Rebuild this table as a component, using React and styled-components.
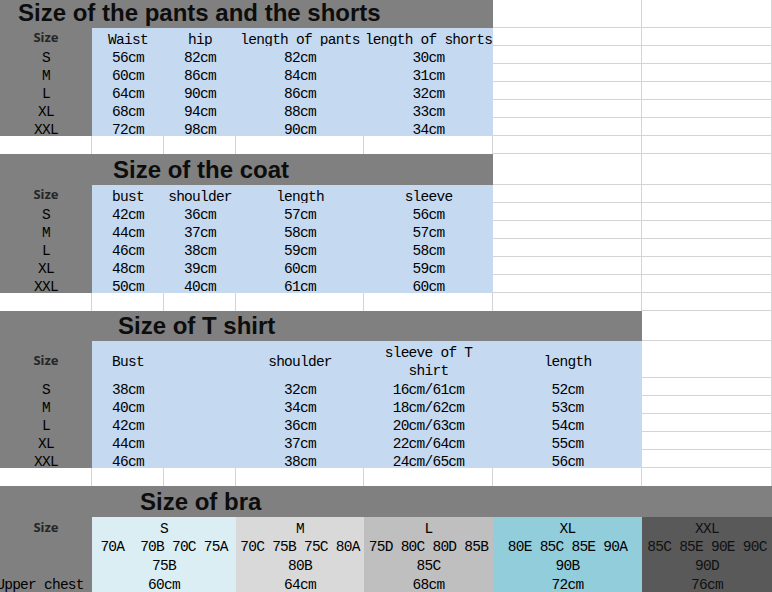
import React from 'react';
import styled, { createGlobalStyle } from 'styled-components';

const Global = createGlobalStyle`
  html, body { margin: 0; padding: 0; background: #ffffff; overflow: hidden; }
  body { width: 772px; height: 592px; }
`;

const TONES = {
  white: '#ffffff',
  gray: '#808080',
  blue: '#c5d9f1',
  braS: '#daeef3',
  braM: '#d9d9d9',
  braL: '#bfbfbf',
  braXL: '#92cddc',
  braXXL: '#595959',
};

const GRID = '#d4d4d4';

const COLS = [92, 72, 72, 128, 129, 149, 130];

const Sheet = styled.div`
  display: grid;
  grid-template-columns: ${COLS.map((c) => `${c}px`).join(' ')};
  grid-template-rows: ${(p) => p.$rows};
  width: 772px;
  height: 592px;
  overflow: hidden;
  font-family: "Liberation Mono", "DejaVu Sans Mono", monospace;
  font-size: 14.5px;
  letter-spacing: -0.75px;
  color: #000000;
`;

const Cell = styled.div`
  grid-column: span ${(p) => p.$span};
  background: ${(p) => TONES[p.$tone]};
  box-shadow: ${(p) => {
    const s = [];
    if (p.$right) s.push(`inset -1px 0 0 ${GRID}`);
    if (p.$bottom) s.push(`inset 0 -1px 0 ${GRID}`);
    return s.length ? s.join(', ') : 'none';
  }};
  display: flex;
  flex-direction: column;
  justify-content: center;
  align-items: center;
  min-width: 0;
  white-space: pre;
  line-height: 18px;
  padding-top: ${(p) => (p.$shift ? '5px' : '0')};
  box-sizing: border-box;
`;

const TitleCell = styled(Cell)`
  justify-content: flex-end;
  align-items: flex-start;
  padding: 0 0 1px ${(p) => p.$indent}px;
  font-family: "Liberation Sans", Arial, sans-serif;
  font-weight: 700;
  font-size: 24px;
  letter-spacing: 0;
  line-height: normal;
  color: #0d0d0d;
`;

const Label = styled.span`
  font-family: "Noto Sans", "Liberation Sans", sans-serif;
  font-weight: 700;
  font-size: 13px;
  letter-spacing: 0;
  color: #262626;
  line-height: 18px;
`;

const StackCell = styled(Cell)`
  justify-content: ${(p) => (p.$spread ? 'space-between' : 'flex-start')};
  padding-top: 0;
`;

const StackLine = styled.div`
  height: ${(p) => p.$h}px;
  display: flex;
  align-items: center;
  justify-content: center;
  padding-top: ${(p) => (p.$mono ? '4px' : '0')};
  padding-right: ${(p) => p.$nudge || 0}px;
  box-sizing: border-box;
  color: ${(p) => p.$ink || '#000'};
`;

/* ---------- data ---------- */

const W = { tone: 'white' };
const sep = () => Array.from({ length: 7 }, () => ({ ...W }));

const title = (text, span, indent) => {
  const row = [{ kind: 'title', tone: 'gray', span, text, indent }];
  for (let i = span; i < 7; i++) row.push({ ...W });
  return row;
};

const header = (labels, blueSpan) => {
  const row = [{ kind: 'label', tone: 'gray', text: 'Size' }];
  labels.forEach((l) => row.push({ tone: 'blue', text: l }));
  for (let i = 1 + blueSpan; i < 7; i++) row.push({ ...W });
  return row;
};

const data = (size, values, blueSpan) => {
  const row = [{ tone: 'gray', text: size }];
  values.forEach((v) => row.push({ tone: 'blue', text: v }));
  for (let i = 1 + blueSpan; i < 7; i++) row.push({ ...W });
  return row;
};

const SIZES = ['S', 'M', 'L', 'XL', 'XXL'];

const pants = [
  ['56cm', '82cm', '82cm', '30cm'],
  ['60cm', '86cm', '84cm', '31cm'],
  ['64cm', '90cm', '86cm', '32cm'],
  ['68cm', '94cm', '88cm', '33cm'],
  ['72cm', '98cm', '90cm', '34cm'],
];

const coat = [
  ['42cm', '36cm', '57cm', '56cm'],
  ['44cm', '37cm', '58cm', '57cm'],
  ['46cm', '38cm', '59cm', '58cm'],
  ['48cm', '39cm', '60cm', '59cm'],
  ['50cm', '40cm', '61cm', '60cm'],
];

const tshirt = [
  ['38cm', '', '32cm', '16cm/61cm', '52cm'],
  ['40cm', '', '34cm', '18cm/62cm', '53cm'],
  ['42cm', '', '36cm', '20cm/63cm', '54cm'],
  ['44cm', '', '37cm', '22cm/64cm', '55cm'],
  ['46cm', '', '38cm', '24cm/65cm', '56cm'],
];

const bra = [
  { tone: 'braS', span: 2, lines: ['S', '70A  70B 70C 75A', '75B', '60cm'] },
  { tone: 'braM', lines: ['M', '70C 75B 75C 80A', '80B', '64cm'] },
  { tone: 'braL', lines: ['L', '75D 80C 80D 85B', '85C', '68cm'] },
  { tone: 'braXL', lines: ['XL', '80E 85C 85E 90A', '90B', '72cm'] },
  { tone: 'braXXL', lines: ['XXL', '85C 85E 90E 90C', '90D', '76cm'], ink: '#111' },
];

const ROWS = [];
const HEIGHTS = [];
const push = (row, h) => {
  ROWS.push(row);
  HEIGHTS.push(h);
};

push(title('Size of the pants and the shorts', 5, 18), 28);
push(header(['Waist', 'hip', 'length of pants', 'length of shorts'], 4), 18);
SIZES.forEach((s, i) => push(data(s, pants[i], 4), 18));
push(sep(), 18);

push(title('Size of the coat', 5, 113), 31);
push(header(['bust', 'shoulder', 'length', 'sleeve'], 4), 18);
SIZES.forEach((s, i) => push(data(s, coat[i], 4), 18));
push(sep(), 18);

push(title('Size of T shirt', 6, 118), 30);
push(header(['Bust', '', 'shoulder', ['sleeve of T', 'shirt'], 'length'], 5), 37);
SIZES.forEach((s, i) => push(data(s, tshirt[i], 5), 18));
push(sep(), 18);

push(title('Size of bra', 7, 140), 31);
push([{ kind: 'braHead', tone: 'gray' }, ...bra.map((b) => ({ kind: 'bra', ...b }))], 75);

/* tone of every column in every row, for the gridlines of unfilled cells */
const toneGrid = ROWS.map((row) => {
  const t = [];
  row.forEach((c) => {
    for (let i = 0; i < (c.span || 1); i++) t.push(c.tone);
  });
  return t;
});

const LINE_H = [19, 18.5, 18.5, 19];

function renderCell(cell, r, col, key) {
  const span = cell.span || 1;
  const white = cell.tone === 'white';
  const right = white && (col + span >= 7 || toneGrid[r][col + span] === 'white');
  const bottom = white && (r === ROWS.length - 1 || toneGrid[r + 1][col] === 'white');
  const common = { key, $span: span, $tone: cell.tone, $right: right, $bottom: bottom };

  if (cell.kind === 'title') {
    return (
      <TitleCell {...common} $indent={cell.indent}>
        {cell.text}
      </TitleCell>
    );
  }
  if (cell.kind === 'label') {
    return (
      <Cell {...common}>
        <Label>{cell.text}</Label>
      </Cell>
    );
  }
  if (cell.kind === 'braHead') {
    return (
      <StackCell {...common} $spread>
        <StackLine $h={19}>
          <Label>Size</Label>
        </StackLine>
        <StackLine $h={19} $mono $nudge={12}>
          Upper chest
        </StackLine>
      </StackCell>
    );
  }
  if (cell.kind === 'bra') {
    return (
      <StackCell {...common}>
        {cell.lines.map((l, i) => (
          <StackLine key={i} $h={LINE_H[i]} $mono $ink={cell.ink}>
            {l}
          </StackLine>
        ))}
      </StackCell>
    );
  }
  const lines = Array.isArray(cell.text) ? cell.text : [cell.text || ''];
  return (
    <Cell {...common} $shift>
      {lines.map((l, i) => (
        <span key={i}>{l}</span>
      ))}
    </Cell>
  );
}

export default function App() {
  return (
    <>
      <Global />
      <Sheet $rows={HEIGHTS.map((h) => `${h}px`).join(' ')}>
        {ROWS.map((row, r) => {
          let col = 0;
          return row.map((cell, ci) => {
            const el = renderCell(cell, r, col, `${r}-${ci}`);
            col += cell.span || 1;
            return el;
          });
        })}
      </Sheet>
    </>
  );
}
